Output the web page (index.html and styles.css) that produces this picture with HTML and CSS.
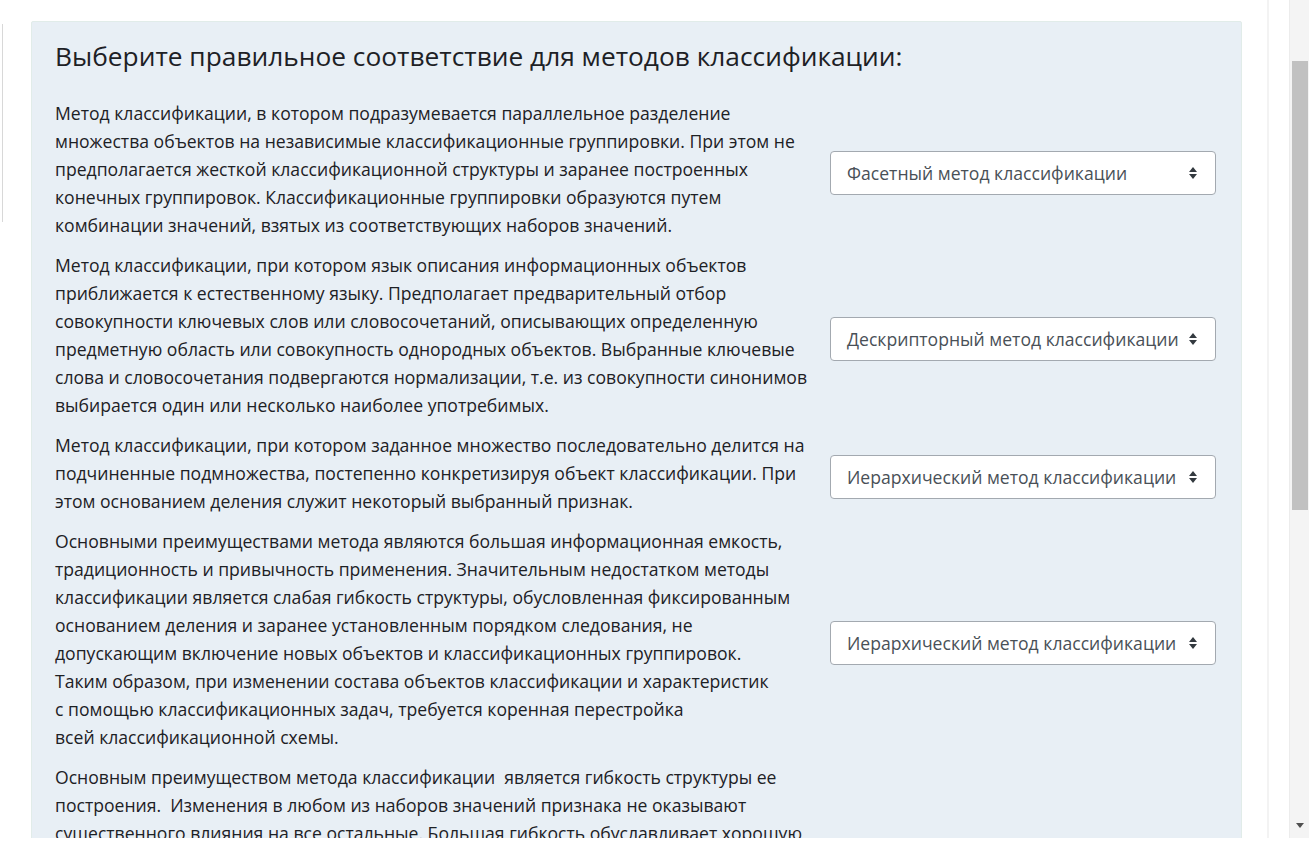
FILE: index.html
```html
<!DOCTYPE html>
<html lang="ru">
<head>
<meta charset="utf-8">
<title>Вопрос</title>
<link rel="stylesheet" href="styles.css">
</head>
<body>
<div class="viewport">
  <div class="drawer-edge"><div class="drawer-line"></div></div>
  <main class="content">
    <div class="formulation">
      <h3 class="qtext">Выберите правильное соответствие для методов классификации:</h3>
      <div class="answers">
        <div class="row">
          <p class="stem">Метод классификации, в котором подразумевается параллельное разделение<br>множества объектов на независимые классификационные группировки. При этом не<br>предполагается жесткой классификационной структуры и заранее построенных<br>конечных группировок. Классификационные группировки образуются путем<br>комбинации значений, взятых из соответствующих наборов значений.</p>
          <div class="control"><div class="select"><span>Фасетный метод классификации</span><svg class="arrows" width="10" height="14" viewBox="0 0 10 14"><path d="M5 1 L9 6 H1 Z M5 13 L9 8 H1 Z" fill="#343a40"/></svg></div></div>
        </div>
        <div class="row">
          <p class="stem">Метод классификации, при котором язык описания информационных объектов<br>приближается к естественному языку. Предполагает предварительный отбор<br>совокупности ключевых слов или словосочетаний, описывающих определенную<br>предметную область или совокупность однородных объектов. Выбранные ключевые<br>слова и словосочетания подвергаются нормализации, т.е. из совокупности синонимов<br>выбирается один или несколько наиболее употребимых.</p>
          <div class="control"><div class="select"><span>Дескрипторный метод классификации</span><svg class="arrows" width="10" height="14" viewBox="0 0 10 14"><path d="M5 1 L9 6 H1 Z M5 13 L9 8 H1 Z" fill="#343a40"/></svg></div></div>
        </div>
        <div class="row">
          <p class="stem">Метод классификации, при котором заданное множество последовательно делится на<br>подчиненные подмножества, постепенно конкретизируя объект классификации. При<br>этом основанием деления служит некоторый выбранный признак.</p>
          <div class="control"><div class="select"><span>Иерархический метод классификации</span><svg class="arrows" width="10" height="14" viewBox="0 0 10 14"><path d="M5 1 L9 6 H1 Z M5 13 L9 8 H1 Z" fill="#343a40"/></svg></div></div>
        </div>
        <div class="row">
          <p class="stem">Основными преимуществами метода являются большая информационная емкость,<br>традиционность и привычность применения. Значительным недостатком методы<br>классификации является слабая гибкость структуры, обусловленная фиксированным<br>основанием деления и заранее установленным порядком следования, не<br>допускающим включение новых объектов и классификационных группировок.<br>Таким образом, при изменении состава объектов классификации и характеристик<br>с помощью классификационных задач, требуется коренная перестройка<br>всей классификационной схемы.</p>
          <div class="control"><div class="select"><span>Иерархический метод классификации</span><svg class="arrows" width="10" height="14" viewBox="0 0 10 14"><path d="M5 1 L9 6 H1 Z M5 13 L9 8 H1 Z" fill="#343a40"/></svg></div></div>
        </div>
        <div class="row">
          <p class="stem">Основным преимуществом метода классификации &nbsp;является гибкость структуры ее<br>построения. &nbsp;Изменения в любом из наборов значений признака не оказывают<br>существенного влияния на все остальные. Большая гибкость обуславливает хорошую<br>приспособляемость системы классификации к изменениям.<br>&nbsp;<br>&nbsp;<br>&nbsp;<br>&nbsp;<br>&nbsp;</p>
          <div class="control"><div class="select"><span>Фасетный метод классификации</span><svg class="arrows" width="10" height="14" viewBox="0 0 10 14"><path d="M5 1 L9 6 H1 Z M5 13 L9 8 H1 Z" fill="#343a40"/></svg></div></div>
        </div>
      </div>
    </div>
  </main>
  <div class="gutter"><div class="gutter-line"></div></div>
</div>
<div class="scrollbar"><div class="thumb"></div><svg class="down" width="8" height="6" viewBox="0 0 8 6"><path d="M0 0 H8 L4 5 Z" fill="#505050"/></svg></div>
</body>
</html>
```

FILE: styles.css
```css
html, body {
  margin: 0;
  padding: 0;
  background: #ffffff;
  overflow: hidden;
  height: 847px;
}

body {
  font-family: "Open Sans", "Noto Sans", "Liberation Sans", sans-serif;
  color: #1d2125;
}

.viewport {
  display: flex;
  width: 1289px;
  height: 838px;
  overflow: hidden;
}

.drawer-edge {
  width: 31px;
  flex: none;
}

.drawer-line {
  margin-top: 24px;
  margin-left: 2px;
  width: 1px;
  height: 198px;
  background: #d8d8d8;
}

.content {
  width: 1211px;
  flex: none;
  padding-top: 21px;
}

.formulation {
  background: #e8eff5;
  border: 1px solid #e1ece9;
  border-radius: 2px;
  padding: 16px 25px 40px 23px;
}

.qtext {
  margin: 0 0 25px 0;
  font-weight: 400;
  font-size: 26.3px;
  line-height: 36px;
  color: #1d2125;
  letter-spacing: 0;
}

.answers {
  display: flex;
  flex-direction: column;
  gap: 12px;
}

.row {
  display: grid;
  grid-template-columns: 1fr 386px;
  column-gap: 19px;
  align-items: center;
}

.stem {
  margin: 0;
  font-size: 17.6px;
  line-height: 28px;
  white-space: nowrap;
  color: #1d2125;
}

.control {
  padding-top: 7px;
}

.select {
  box-sizing: border-box;
  height: 44px;
  width: 386px;
  background: #ffffff;
  border: 1px solid #a3a9b0;
  border-radius: 4px;
  display: flex;
  align-items: center;
  justify-content: space-between;
  padding: 0 17px 0 16px;
  font-size: 17.6px;
  color: #495057;
  white-space: nowrap;
}

.arrows {
  flex: none;
}

.gutter {
  width: 47px;
  flex: none;
  display: flex;
  justify-content: flex-start;
}

.gutter-line {
  margin-left: 25px;
  width: 2px;
  height: 838px;
  background: #f3f3f3;
}

.scrollbar {
  position: fixed;
  top: 0;
  right: 0;
  width: 20px;
  height: 838px;
  background: #f4f4f4;
  border-left: 1px solid #ececec;
  box-sizing: border-box;
}

.thumb {
  position: absolute;
  top: 61px;
  left: 2px;
  width: 16px;
  height: 449px;
  background: #c1c1c1;
}

.down {
  position: absolute;
  left: 6px;
  bottom: 9px;
}
```
